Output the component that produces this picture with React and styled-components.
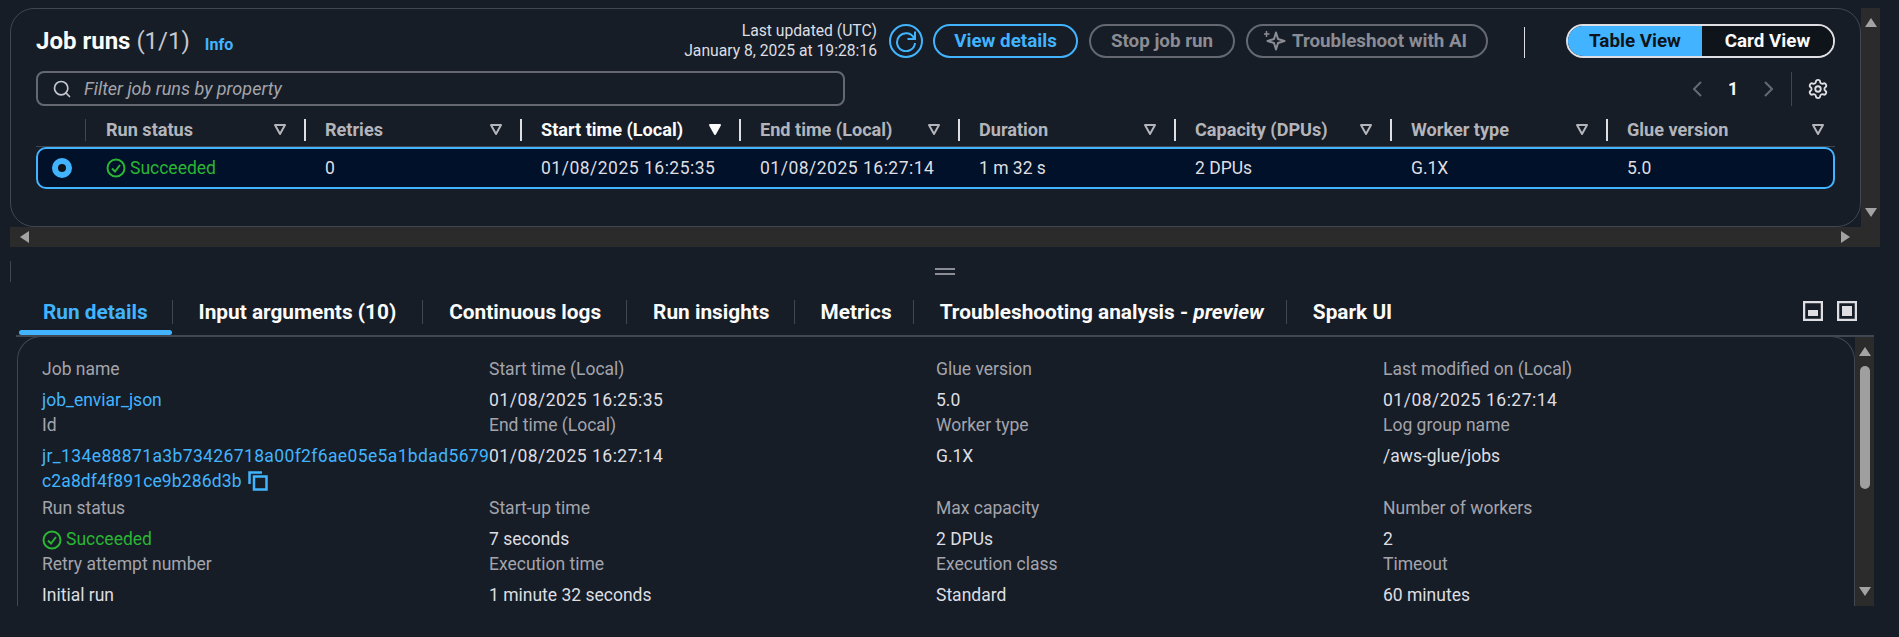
import React from 'react';
import styled, { createGlobalStyle } from 'styled-components';
import { Search, Settings } from 'lucide-react';

const GlobalStyle = createGlobalStyle`
  html, body {
    margin: 0;
    background: #161d26;
    font-family: Roboto, "Liberation Sans", sans-serif;
    color: #dedee3;
  }
  * { box-sizing: border-box; }
`;

const Page = styled.div`
  width: 1899px;
  height: 637px;
  overflow: hidden;
  padding-top: 8px;
  background: #161d26;
`;

// top split pane
const TopArea = styled.div`
  display: grid;
  grid-template-columns: 1851px 19px;
  grid-template-rows: 219px 20px;
  margin-left: 10px;
  width: 1870px;
`;

const Panel = styled.section`
  border: 1px solid #424650;
  border-radius: 24px;
  padding: 15px 25px 0 25px;
  overflow: hidden;
`;

const VScroll = styled.div`
  background: #2b2b2b;
  display: flex;
  flex-direction: column;
  align-items: center;
  justify-content: space-between;
  padding: 10px 0;
  margin-top: ${p => p.$top || 0}px;
`;

const Thumb = styled.div`
  width: 10px;
  height: 123px;
  border-radius: 5px;
  background: #9f9f9f;
  margin: 10px 0 auto;
`;

const HScroll = styled.div`
  grid-column: 1 / 3;
  background: #2b2b2b;
  display: flex;
  align-items: center;
  justify-content: space-between;
  padding: 0 30px 0 10px;
`;

const Arrow = styled.span`
  width: 0;
  height: 0;
  border-style: solid;
  border-color: transparent;
  ${p => p.$dir === 'up' && 'border-width: 0 6px 9px 6px; border-bottom-color: #a3a3a3;'}
  ${p => p.$dir === 'down' && 'border-width: 9px 6px 0 6px; border-top-color: #a3a3a3;'}
  ${p => p.$dir === 'left' && 'border-width: 6px 9px 6px 0; border-right-color: #a3a3a3;'}
  ${p => p.$dir === 'right' && 'border-width: 6px 0 6px 9px; border-left-color: #a3a3a3;'}
`;

const Toolbar = styled.div`
  display: flex;
  align-items: center;
  height: 34px;
`;

const Title = styled.h1`
  margin: 0;
  font-size: 24px;
  font-weight: 700;
  color: #fbfbfb;
  line-height: 34px;
`;

const Count = styled.span`
  font-weight: 400;
  color: #c6c6cd;
`;

const InfoLink = styled.a`
  font-size: 16px;
  font-weight: 700;
  color: #42b4ff;
  margin: 7px 0 0 15px;
`;

const Updated = styled.div`
  margin-left: auto;
  text-align: right;
  font-size: 15.7px;
  line-height: 20px;
  color: #dedee3;
  margin-right: 12px;
`;

const RefreshButton = styled.button`
  width: 34px;
  height: 34px;
  padding: 0;
  background: transparent;
  border: 2px solid #42b4ff;
  border-radius: 50%;
  display: flex;
  align-items: center;
  justify-content: center;
  margin-right: 10px;
`;

const Button = styled.button`
  width: ${p => p.$width}px;
  height: 34px;
  padding: 0 ${p => p.$pr || 0}px 0 0;
  background: transparent;
  border: 2px solid ${p => (p.$primary ? '#42b4ff' : '#656871')};
  border-radius: 17px;
  color: ${p => (p.$primary ? '#42b4ff' : '#8c8c94')};
  font: 700 18.8px Roboto, sans-serif;
  margin-right: 11px;
  display: flex;
  align-items: center;
  justify-content: center;
  gap: 6px;
`;

const VRule = styled.div`
  width: 1px;
  height: 31px;
  background: #dedee3;
  margin: 3px 41px 0 25px;
`;

const Segmented = styled.div`
  display: flex;
  height: 34px;
  width: 269px;
  border: 2px solid #dedee3;
  border-radius: 17px;
  overflow: hidden;
`;

const Segment = styled.div`
  flex: ${p => (p.$active ? '0 0 134px' : 1)};
  display: flex;
  align-items: center;
  justify-content: center;
  font-size: 18.8px;
  font-weight: 700;
  background: ${p => (p.$active ? '#42b4ff' : '#0f141a')};
  color: ${p => (p.$active ? '#0f141a' : '#fbfbfb')};
`;

const FilterRow = styled.div`
  display: flex;
  align-items: center;
  margin-top: 13px;
  height: 35px;
`;

const FilterBox = styled.div`
  width: 809px;
  height: 35px;
  border: 2px solid #656871;
  border-radius: 8px;
  display: flex;
  align-items: center;
  padding-left: 14px;
  gap: 12px;
  color: #a4a4ad;
  font-size: 18px;
  font-style: italic;
`;

const Pager = styled.div`
  margin-left: auto;
  margin-right: 6px;
  display: flex;
  align-items: center;
  height: 35px;
  color: #fbfbfb;
  font-weight: 700;
  font-size: 17.5px;
`;

const PageNumber = styled.span`
  width: 60px;
  text-align: center;
`;

const PagerRule = styled.div`
  width: 1px;
  height: 34px;
  background: #424650;
  margin: 0 15px 0 18px;
`;

const Columns = '49px 219px 216px 219px 219px 216px 216px 216px 229px';

const TableHead = styled.div`
  display: grid;
  grid-template-columns: ${Columns};
  margin-top: 13px;
  height: 28px;
  border-bottom: 1px solid #424650;
  align-items: start;
`;

const HeadCell = styled.div`
  height: 22px;
  display: flex;
  align-items: center;
  justify-content: space-between;
  padding: 0 ${p => (p.$last ? 10 : 17)}px 2px ${p => (p.$first ? 20 : 19)}px;
  border-left: ${p => (p.$first ? '1px solid #424650' : '2px solid #dedee3')};
  font-size: 18.1px;
  font-weight: 700;
  color: ${p => (p.$sorted ? '#fbfbfb' : '#b4b4bb')};
`;

const TableRow = styled.div`
  display: grid;
  grid-template-columns: ${Columns};
  height: 42px;
  align-items: center;
  border: 2px solid #42b4ff;
  border-radius: 10px;
  background: #001129;
  font-size: 17.5px;
  color: #dedee3;
`;

const Cell = styled.div`
  padding-left: 19px;
  letter-spacing: ${p => p.$track || 0}px;
`;

const Radio = styled.span`
  display: block;
  width: 20px;
  height: 20px;
  margin-left: 14px;
  border-radius: 50%;
  border: 6px solid #42b4ff;
  background: #0f141a;
`;

const Status = styled.span`
  display: flex;
  align-items: center;
  height: 25px;
  gap: 4px;
  color: #2bb534;
`;

// resize handle between the two panes
const Splitter = styled.div`
  display: flex;
  height: 53px;
  padding-left: 10px;
`;

const SplitLine = styled.div`
  width: 1px;
  height: 21px;
  margin-top: 14px;
  background: #424650;
`;

const Grip = styled.div`
  width: 20px;
  height: 7px;
  margin: 21px 0 0 924px;
  border-top: 2px solid #8c8c94;
  border-bottom: 2px solid #8c8c94;
`;

const Tabs = styled.nav`
  display: flex;
  align-items: flex-start;
  height: 37px;
  margin-left: 16px;
  width: 1858px;
  padding-left: 3px;
  border-bottom: 2px solid #424650;
`;

const Tab = styled.div`
  height: 35px;
  position: relative;
  padding: 0 ${p => p.$pr}px 0 ${p => (p.$active ? 24 : 26)}px;
  font-size: 20.8px;
  font-weight: 700;
  line-height: 24px;
  white-space: nowrap;
  color: ${p => (p.$active ? '#42b4ff' : '#fbfbfb')};
  ${p => p.$active && `
    &::after {
      content: '';
      position: absolute;
      left: 0;
      right: 0;
      bottom: 0;
      height: 5px;
      border-radius: 3px;
      background: #42b4ff;
    }
  `}
`;

const TabRule = styled.div`
  width: 1px;
  height: 24px;
  background: #424650;
`;

const PaneButtons = styled.div`
  margin-left: auto;
  display: flex;
  gap: 14px;
  margin-right: 17px;
  margin-top: 1px;
`;

const Details = styled.div`
  display: grid;
  grid-template-columns: 1fr 19px;
  margin: -1px 0 0 17px;
  width: 1857px;
  height: 270px;
`;

const DetailsBody = styled.div`
  border: 1px solid #424650;
  border-bottom: none;
  border-radius: 24px 24px 0 0;
  overflow: hidden;
  padding: 20px 0 0 24px;
  display: grid;
  grid-template-columns: repeat(4, 447px);
  align-content: start;
`;

const Field = styled.div`
  min-width: 0;
`;

const Label = styled.div`
  font-size: 17.5px;
  line-height: 24px;
  color: #a4a4ad;
  margin-bottom: 7px;
`;

const Value = styled.div`
  font-size: 17.5px;
  line-height: 25px;
  color: ${p => (p.$link ? '#42b4ff' : '#dedee3')};
  letter-spacing: ${p => p.$track || 0}px;
`;

const IdValue = styled(Value)`
  margin-bottom: 2px;
`;

const IdLine = styled.div`
  white-space: nowrap;
  letter-spacing: ${p => p.$track}px;
`;

const FilterIcon = ({ solid }) => (
  <svg width="14" height="13" viewBox="0 0 14 13">
    <path
      d="M2 2h10L7 11z"
      fill={solid ? '#fbfbfb' : 'none'}
      stroke={solid ? '#fbfbfb' : '#b4b4bb'}
      strokeWidth="2"
      strokeLinejoin="round"
    />
  </svg>
);

const CheckIcon = () => (
  <svg width="20" height="20" viewBox="0 0 20 20" fill="none" stroke="#2bb534" strokeWidth="2">
    <circle cx="10" cy="10" r="8.5" />
    <path d="M6 10.5l3 3 5-6.5" />
  </svg>
);

const RefreshIcon = () => (
  <svg width="22" height="22" viewBox="0 0 22 22" fill="none" stroke="#42b4ff" strokeWidth="2">
    <path d="M19 8A9 9 0 1 0 20 13" />
    <path d="M20 1.500v7.500h-7.500" />
  </svg>
);

const SparkleIcon = () => (
  <svg width="22" height="22" viewBox="0 0 22 22" fill="none" stroke="#8c8c94" strokeWidth="2">
    <path d="M12 2.500L14 9L20.500 11L14 13L12 19.500L10 13L3.500 11L10 9z" strokeLinejoin="round" />
    <path d="M2.500 1v6M-0.500 4h6" strokeWidth="1.500" />
  </svg>
);

const CopyIcon = () => (
  <svg width="20" height="20" viewBox="0 0 20 20" fill="none" stroke="#42b4ff" strokeWidth="2.500" style={{ verticalAlign: -4, marginLeft: 6 }}>
    <path d="M1.500 13V1.500H14" />
    <rect x="6" y="5.500" width="12.500" height="13" />
  </svg>
);

const PaneIcon = ({ full }) => (
  <svg width="20" height="20" viewBox="0 0 20 20">
    <rect x="1" y="1" width="18" height="18" fill="none" stroke="#dedee3" strokeWidth="2.500" />
    <rect x="5" y={full ? 5 : 9} width="10" height={full ? 10 : 6} fill="#dedee3" />
  </svg>
);

const PagerArrow = ({ right }) => (
  <svg width="10" height="16" viewBox="0 0 10 16" fill="none" stroke="#656871" strokeWidth="2">
    <path d={right ? 'M2 1l7 7-7 7' : 'M8 1L1 8l7 7'} />
  </svg>
);

const headers = [
  ['Run status'],
  ['Retries'],
  ['Start time (Local)', true],
  ['End time (Local)'],
  ['Duration'],
  ['Capacity (DPUs)'],
  ['Worker type'],
  ['Glue version'],
];

const fields = [
  ['Job name', 'job_enviar_json', 'link'],
  ['Start time (Local)', '01/08/2025 16:25:35', 'date'],
  ['Glue version', '5.0'],
  ['Last modified on (Local)', '01/08/2025 16:27:14', 'date'],
  ['Id', '', 'id'],
  ['End time (Local)', '01/08/2025 16:27:14', 'date'],
  ['Worker type', 'G.1X'],
  ['Log group name', '/aws-glue/jobs'],
  ['Run status', 'Succeeded', 'status'],
  ['Start-up time', '7 seconds'],
  ['Max capacity', '2 DPUs'],
  ['Number of workers', '2'],
  ['Retry attempt number', 'Initial run'],
  ['Execution time', '1 minute 32 seconds'],
  ['Execution class', 'Standard'],
  ['Timeout', '60 minutes'],
];

const tabs = [
  ['Run details', 24],
  ['Input arguments (10)', 26],
  ['Continuous logs', 25],
  ['Run insights', 24],
  ['Metrics', 21],
  ['Troubleshooting analysis - ', 22, 'preview'],
];

const App = () => (
  <Page>
    <GlobalStyle />
    <TopArea>
      <Panel>
        <Toolbar>
          <Title>Job runs <Count>(1/1)</Count></Title>
          <InfoLink>Info</InfoLink>
          <Updated>
            Last updated (UTC)<br />January 8, 2025 at 19:28:16
          </Updated>
          <RefreshButton><RefreshIcon /></RefreshButton>
          <Button $primary $width={145}>View details</Button>
          <Button $width={146}>Stop job run</Button>
          <Button $width={242} $pr={3}><SparkleIcon />Troubleshoot with AI</Button>
          <VRule />
          <Segmented>
            <Segment $active>Table View</Segment>
            <Segment>Card View</Segment>
          </Segmented>
        </Toolbar>

        <FilterRow>
          <FilterBox><Search size={20} strokeWidth={2} color="#c6c6cd" />Filter job runs by property</FilterBox>
          <Pager>
            <PagerArrow />
            <PageNumber>1</PageNumber>
            <PagerArrow right />
            <PagerRule />
            <Settings size={22} color="#dedee3" />
          </Pager>
        </FilterRow>

        <TableHead>
          <div />
          {headers.map(([name, sorted], i) => (
            <HeadCell key={name} $first={i === 0} $last={i === headers.length - 1} $sorted={sorted}>
              {name}
              <FilterIcon solid={sorted} />
            </HeadCell>
          ))}
        </TableHead>
        <TableRow>
          <Radio />
          <Cell><Status><CheckIcon />Succeeded</Status></Cell>
          <Cell>0</Cell>
          <Cell $track={0.5}>01/08/2025 16:25:35</Cell>
          <Cell $track={0.5}>01/08/2025 16:27:14</Cell>
          <Cell>1 m 32 s</Cell>
          <Cell>2 DPUs</Cell>
          <Cell>G.1X</Cell>
          <Cell>5.0</Cell>
        </TableRow>
      </Panel>
      <VScroll>
        <Arrow $dir="up" />
        <Arrow $dir="down" />
      </VScroll>
      <HScroll>
        <Arrow $dir="left" />
        <Arrow $dir="right" />
      </HScroll>
    </TopArea>

    <Splitter>
      <SplitLine />
      <Grip />
    </Splitter>

    <Tabs>
      {tabs.map(([t, pr, em], i) => (
        <React.Fragment key={t}>
          <Tab $active={i === 0} $pr={pr}>{t}{em && <em>{em}</em>}</Tab>
          <TabRule />
        </React.Fragment>
      ))}
      <Tab $pr={25}>Spark UI</Tab>
      <PaneButtons>
        <PaneIcon />
        <PaneIcon full />
      </PaneButtons>
    </Tabs>

    <Details>
      <DetailsBody>
        {fields.map(([label, value, kind]) => (
          <Field key={label}>
            <Label>{label}</Label>
            {kind === 'status' && <Value><Status><CheckIcon />{value}</Status></Value>}
            {kind === 'id' && (
              <IdValue $link>
                <IdLine $track={0.37}>jr_134e88871a3b73426718a00f2f6ae05e5a1bdad5679</IdLine>
                <IdLine $track={0.13}>c2a8df4f891ce9b286d3b<CopyIcon /></IdLine>
              </IdValue>
            )}
            {kind !== 'status' && kind !== 'id' && (
              <Value $link={kind === 'link'} $track={kind === 'date' ? 0.5 : 0}>{value}</Value>
            )}
          </Field>
        ))}
      </DetailsBody>
      <VScroll $top={1}>
        <Arrow $dir="up" />
        <Thumb />
        <Arrow $dir="down" />
      </VScroll>
    </Details>
  </Page>
);

export default App;
